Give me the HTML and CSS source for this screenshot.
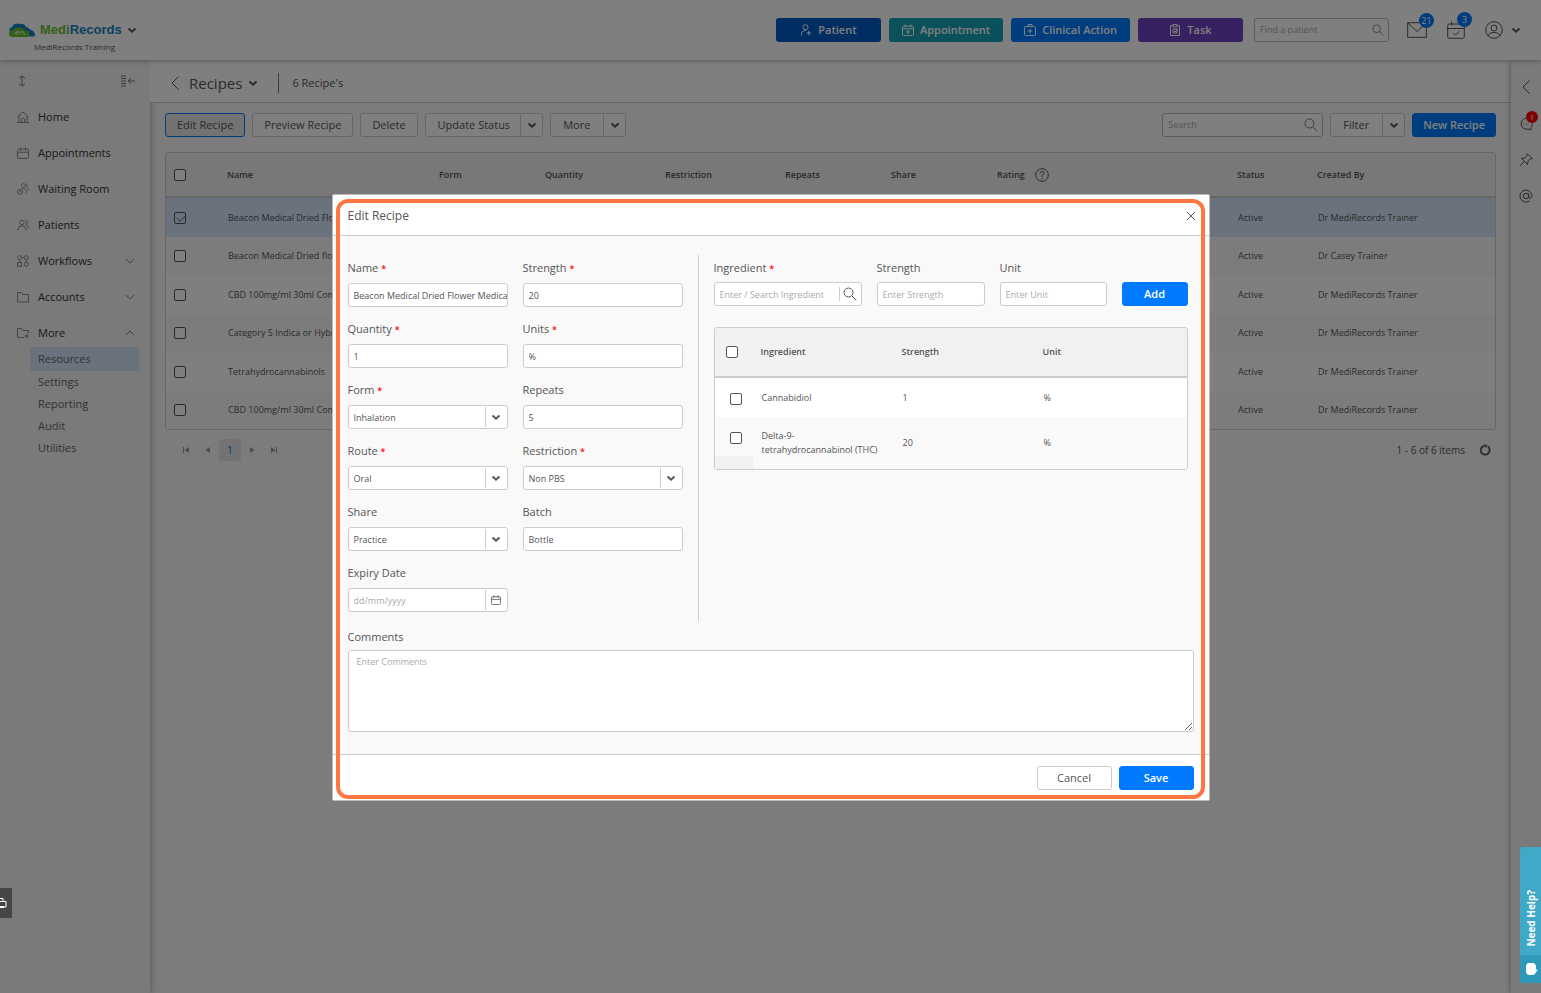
FILE: index.html
```html
<!DOCTYPE html>
<html lang="en">
<head>
    <meta charset="UTF-8">
    <meta name="viewport" content="width=device-width, initial-scale=1.0">
    <title>MediRecords - Recipes</title>
    <link rel="stylesheet" href="styles.css">
</head>
<body>
    <!-- Icon set -->
    <svg class="sprite" aria-hidden="true">
        <symbol id="i-down" viewBox="0 0 10 10"><path d="M1.5 3.5 5 6.8 8.5 3.5" stroke-width="1.9"/></symbol>
        <symbol id="i-thin-down" viewBox="0 0 10 10"><path d="M1 3 5 7 9 3"/></symbol>
        <symbol id="i-thin-up" viewBox="0 0 10 10"><path d="M1 7 5 3 9 7"/></symbol>
        <symbol id="i-back" viewBox="0 0 10 16"><path d="M8.5 1.5 2 8l6.500 6.500"/></symbol>
        <symbol id="i-search" viewBox="0 0 14 14"><circle cx="5.500" cy="5.500" r="4.500"/><path d="m8.800 8.800 4.500 4.500"/></symbol>
        <symbol id="i-close" viewBox="0 0 10 10"><path d="m1 1 8 8M9 1 1 9"/></symbol>
        <symbol id="i-calendar" viewBox="0 0 12 12"><rect x=".5" y="2" width="11" height="9.500" rx="1.500"/><path d="M.5 5.200h11M3.500.5v3M8.500.5v3"/></symbol>
        <symbol id="i-home" viewBox="0 0 12 12"><path d="M.5 6 6 1l5.500 5M2 5v6.500h8V5M4.500 11.500V8q1.500-2 3 0v3.500M0 11.500h12"/></symbol>
        <symbol id="i-person" viewBox="0 0 12 12"><circle cx="5" cy="3.500" r="2.200"/><path d="M1 11.500V10q0-3 4-3.200 4 .2 4 3.200v1.500M8 .8q2.800.4 2.300 2.800Q10 5 8.600 5.400q2.800 1 2.900 4.100"/></symbol>
        <symbol id="i-waiting" viewBox="0 0 14 14"><circle cx="7.500" cy="3" r="2.300"/><circle cx="3.500" cy="10.300" r="3"/><path d="M3.500 8.500v2h1.500M6 6.500q4.500-.4 5 3.500v2M10.500 1q2 .6 1.700 2.500-.2 1.300-1.300 1.600 2.400.8 2.500 3.900"/></symbol>
        <symbol id="i-flow" viewBox="0 0 12 12"><circle cx="2.700" cy="2.700" r="2"/><circle cx="9.300" cy="2.700" r="2"/><circle cx="9.300" cy="9.300" r="2"/><rect x=".7" y="7.500" width="3.800" height="3.800"/><path d="M4.700 2.700h2.600M2.700 4.700v2.800M9.300 4.700v2.600"/></symbol>
        <symbol id="i-folder" viewBox="0 0 12 12"><path d="M.5 11V1.500h4l1 2h6V11z"/></symbol>
        <symbol id="i-folder-plus" viewBox="0 0 12 12"><path d="M7 10.500H.5V1.500h4l1 2h6V6M7.500 9H12M9.800 6.800v4.500"/></symbol>
        <symbol id="i-add-person" viewBox="0 0 12 12"><circle cx="5.500" cy="3.200" r="2.500"/><path d="M1.500 11.500V10q0-3.500 4.500-3.500M8.800 6.700v4.600M6.500 9h4.600"/></symbol>
        <symbol id="i-add-cal" viewBox="0 0 12 12"><rect x=".5" y="2" width="11" height="9.500" rx="1"/><path d="M.5 4.800h11M3.200.5v3M8.800.5v3M6 6v4M4 8h4"/></symbol>
        <symbol id="i-kit" viewBox="0 0 12 12"><rect x=".5" y="2.500" width="11" height="9" rx="1"/><path d="M4 2.500v-2h4v2M6 4.700v4.600M3.700 7h4.600"/></symbol>
        <symbol id="i-clip" viewBox="0 0 12 12"><path d="M4 1.700H1.500v9.800h9V1.700H8M4 .5h4v2.300H4zM4 5h4v4H4zM5 7l1 1 2.500-3"/></symbol>
        <symbol id="i-mail" viewBox="0 0 20 16"><rect x=".7" y=".7" width="18.600" height="14.600"/><path d="m1 1 9 8.500L19 1"/></symbol>
        <symbol id="i-event" viewBox="0 0 18 18"><rect x=".7" y="3" width="16.600" height="14.300" rx="1.500"/><path d="M.7 7.500h16.600M4.500.5v4M13.500.5v4M6.500 12l2 2 4-3.800"/></symbol>
        <symbol id="i-user" viewBox="0 0 18 18"><circle cx="9" cy="9" r="8.300"/><circle cx="9" cy="7" r="3"/><path d="M3.300 14.800q.7-3.300 5.700-3.300t5.700 3.300"/></symbol>
        <symbol id="i-help" viewBox="0 0 14 14"><circle cx="7" cy="7" r="6.300"/><path d="M5 5.500Q5 3.500 7 3.500t2 1.800Q9 6.500 7 7.500V9M7 10v1.200"/></symbol>
        <symbol id="i-updown" viewBox="0 0 10 12"><path d="M5 1v10M2 3.500 5 .8l3 2.700M2 8.500l3 2.700 3-2.700"/></symbol>
        <symbol id="i-collapse" viewBox="0 0 14 12"><path d="M0 1h5M0 3.500h5M0 6h5M0 8.500h5M0 11h5M7 6h7M10 3 7 6l3 3"/></symbol>
        <symbol id="i-chat" viewBox="0 0 14 14"><path d="M12 12.800v-2.500A5.600 5.600 0 1 0 9.500 12zM4.500 7h.8M6.600 7h.8M8.700 7h.8"/></symbol>
        <symbol id="i-pin" viewBox="0 0 14 14"><path d="m8.500.8 4.700 4.700-2 .5L9 8.200l-.5 3.300L2.500 5.500l3.300-.5L8 2.800zM5 8.500.8 13.200"/></symbol>
        <symbol id="i-at" viewBox="0 0 14 14"><circle cx="7" cy="7" r="2.700"/><path d="M9.700 4.300V8q.2 1.700 1.800 1.500 1.500-.5 1.500-2.500a6 6 0 1 0-2.500 5"/></symbol>
        <symbol id="i-refresh" viewBox="0 0 12 12"><path d="M8.800 2.500A4.500 4.500 0 1 1 5 1.800" stroke-width="1.800"/><path d="M5 0 8.500 1.500 6 4z" fill="currentColor" stroke="none"/></symbol>
        <symbol id="i-prev" viewBox="0 0 8 8"><path d="M6 1v6L1.500 4z" fill="currentColor" stroke="none"/></symbol>
        <symbol id="i-next" viewBox="0 0 8 8"><path d="M2 1v6l4.500-3z" fill="currentColor" stroke="none"/></symbol>
        <symbol id="i-first" viewBox="0 0 8 8"><path d="M7 1v6L2.500 4zM1 1h1v6H1z" fill="currentColor" stroke="none"/></symbol>
        <symbol id="i-last" viewBox="0 0 8 8"><path d="M1 1v6l4.500-3zM6 1h1v6H6z" fill="currentColor" stroke="none"/></symbol>
    </svg>

    <header class="topbar">
        <div class="brand">
            <a href="#" class="logo">
                <svg class="cloud" viewBox="0 0 27 15" aria-hidden="true">
                    <path d="M3 10Q-1 6 4 4 6-1 12 1q4-1 6 3 3 0 4 2.500 5 1 5 6.500-3 1-7 0z" fill="#1480c0"/>
                    <path d="M4 14Q0 13 1 9.500 2 7 5 7q2-3 6-2.500 4 0 5.500 3 4-.5 5 2.500.5 3-2 4z" fill="#6abf2f"/>
                    <path d="m6 11 4-3-1 4M12 8v3M14 8l3 4" stroke="#fff" fill="none"/>
                </svg>
                <span class="medi">Medi</span><span class="records">Records</span>
                <svg class="icon chev"><use href="#i-down"/></svg>
            </a>
            <span class="practice">MediRecords Training</span>
        </div>
        <div class="top-actions">
            <button class="btn-top patient"><svg class="icon s12"><use href="#i-add-person"/></svg>Patient</button>
            <button class="btn-top appointment"><svg class="icon s12"><use href="#i-add-cal"/></svg>Appointment</button>
            <button class="btn-top clinical"><svg class="icon s12"><use href="#i-kit"/></svg>Clinical Action</button>
            <button class="btn-top task"><svg class="icon s12"><use href="#i-clip"/></svg>Task</button>
        </div>
        <label class="search find">
            <input type="text" placeholder="Find a patient" aria-label="Find a patient">
            <svg class="icon s12"><use href="#i-search"/></svg>
        </label>
        <div class="top-icons">
            <button class="icon-btn" aria-label="Messages"><svg class="icon mail"><use href="#i-mail"/></svg><span class="badge">21</span></button>
            <button class="icon-btn" aria-label="Tasks"><svg class="icon s18"><use href="#i-event"/></svg><span class="badge">3</span></button>
            <button class="icon-btn account" aria-label="Account"><svg class="icon s18"><use href="#i-user"/></svg><svg class="icon chev"><use href="#i-down"/></svg></button>
        </div>
    </header>

    <div class="layout">
        <nav class="sidebar">
            <div class="side-tools">
                <svg class="icon s12"><use href="#i-updown"/></svg>
                <svg class="icon s14"><use href="#i-collapse"/></svg>
            </div>
            <a href="#" class="side-link"><svg class="icon s12"><use href="#i-home"/></svg>Home</a>
            <a href="#" class="side-link"><svg class="icon s12"><use href="#i-calendar"/></svg>Appointments</a>
            <a href="#" class="side-link"><svg class="icon s12"><use href="#i-waiting"/></svg>Waiting Room</a>
            <a href="#" class="side-link"><svg class="icon s12"><use href="#i-person"/></svg>Patients</a>
            <a href="#" class="side-link"><svg class="icon s12"><use href="#i-flow"/></svg>Workflows<svg class="icon s10 arrow"><use href="#i-thin-down"/></svg></a>
            <a href="#" class="side-link"><svg class="icon s12"><use href="#i-folder"/></svg>Accounts<svg class="icon s10 arrow"><use href="#i-thin-down"/></svg></a>
            <a href="#" class="side-link"><svg class="icon s12"><use href="#i-folder-plus"/></svg>More<svg class="icon s10 arrow"><use href="#i-thin-up"/></svg></a>
            <div class="submenu">
                <a href="#" class="active">Resources</a>
                <a href="#">Settings</a>
                <a href="#">Reporting</a>
                <a href="#">Audit</a>
                <a href="#">Utilities</a>
            </div>
        </nav>

        <main>
            <div class="title-bar">
                <svg class="icon back"><use href="#i-back"/></svg>
                <h1>Recipes</h1>
                <svg class="icon chev"><use href="#i-down"/></svg>
                <span class="count">6 Recipe's</span>
            </div>

            <div class="toolbar">
                <button class="btn selected">Edit Recipe</button>
                <button class="btn">Preview Recipe</button>
                <button class="btn">Delete</button>
                <div class="split"><button>Update Status</button><button class="drop" aria-label="Update Status options"><svg class="icon chev"><use href="#i-down"/></svg></button></div>
                <div class="split"><button class="wide">More</button><button class="drop" aria-label="More options"><svg class="icon chev"><use href="#i-down"/></svg></button></div>
                <label class="search grow">
                    <input type="text" placeholder="Search" aria-label="Search">
                    <svg class="icon s14"><use href="#i-search"/></svg>
                </label>
                <div class="split"><button class="wide">Filter</button><button class="drop" aria-label="Filter options"><svg class="icon chev"><use href="#i-down"/></svg></button></div>
                <button class="btn primary">New Recipe</button>
            </div>

            <div class="grid-box">
                <table class="recipes">
                    <colgroup>
                        <col class="c-check"><col class="c-name"><col class="c-form"><col class="c-qty"><col class="c-qty"><col class="c-form"><col class="c-form"><col class="c-rating"><col class="c-status"><col>
                    </colgroup>
                    <thead>
                        <tr>
                            <th><input type="checkbox" aria-label="Select all recipes"></th>
                            <th>Name</th><th>Form</th><th>Quantity</th><th>Restriction</th><th>Repeats</th><th>Share</th>
                            <th><span class="rating">Rating <svg class="icon s14"><use href="#i-help"/></svg></span></th>
                            <th>Status</th><th>Created By</th>
                        </tr>
                    </thead>
                    <tbody>
                        <tr class="selected"><td><input type="checkbox" checked aria-label="Select recipe"></td><td>Beacon Medical Dried Flower</td><td></td><td></td><td></td><td></td><td></td><td></td><td>Active</td><td>Dr MediRecords Trainer</td></tr>
                        <tr><td><input type="checkbox" aria-label="Select recipe"></td><td>Beacon Medical Dried flower</td><td></td><td></td><td></td><td></td><td></td><td></td><td>Active</td><td>Dr Casey Trainer</td></tr>
                        <tr><td><input type="checkbox" aria-label="Select recipe"></td><td>CBD 100mg/ml 30ml Compound</td><td></td><td></td><td></td><td></td><td></td><td></td><td>Active</td><td>Dr MediRecords Trainer</td></tr>
                        <tr><td><input type="checkbox" aria-label="Select recipe"></td><td>Category 5 Indica or Hybrid</td><td></td><td></td><td></td><td></td><td></td><td></td><td>Active</td><td>Dr MediRecords Trainer</td></tr>
                        <tr><td><input type="checkbox" aria-label="Select recipe"></td><td>Tetrahydrocannabinols</td><td></td><td></td><td></td><td></td><td></td><td></td><td>Active</td><td>Dr MediRecords Trainer</td></tr>
                        <tr><td><input type="checkbox" aria-label="Select recipe"></td><td>CBD 100mg/ml 30ml Compound</td><td></td><td></td><td></td><td></td><td></td><td></td><td>Active</td><td>Dr MediRecords Trainer</td></tr>
                    </tbody>
                </table>
            </div>

            <div class="pager">
                <button aria-label="First page"><svg class="icon s8"><use href="#i-first"/></svg></button>
                <button aria-label="Previous page"><svg class="icon s8"><use href="#i-prev"/></svg></button>
                <button class="current">1</button>
                <button aria-label="Next page"><svg class="icon s8"><use href="#i-next"/></svg></button>
                <button aria-label="Last page"><svg class="icon s8"><use href="#i-last"/></svg></button>
                <span class="total">1 - 6 of 6 items</span>
                <svg class="icon s12"><use href="#i-refresh"/></svg>
            </div>
        </main>

        <aside class="rail">
            <svg class="icon back"><use href="#i-back"/></svg>
            <button class="icon-btn" aria-label="Chat"><svg class="icon s14"><use href="#i-chat"/></svg><span class="badge red">1</span></button>
            <svg class="icon s14"><use href="#i-pin"/></svg>
            <svg class="icon s14"><use href="#i-at"/></svg>
        </aside>
    </div>

    <div class="overlay">
        <div class="modal" role="dialog" aria-labelledby="modalTitle">
            <div class="modal-header">
                <h2 id="modalTitle">Edit Recipe</h2>
                <button class="close" aria-label="Close"><svg class="icon s10"><use href="#i-close"/></svg></button>
            </div>

            <div class="modal-body">
                <div class="columns">
                    <div class="recipe-form">
                        <div class="field"><label for="name">Name <b>*</b></label><input id="name" type="text" value="Beacon Medical Dried Flower Medical"></div>
                        <div class="field"><label for="strength">Strength <b>*</b></label><input id="strength" type="text" value="20"></div>
                        <div class="field"><label for="quantity">Quantity <b>*</b></label><input id="quantity" type="text" value="1"></div>
                        <div class="field"><label for="units">Units <b>*</b></label><input id="units" type="text" value="%"></div>
                        <div class="field"><label for="form">Form <b>*</b></label><div class="combo"><select id="form"><option>Inhalation</option></select><span><svg class="icon chev"><use href="#i-down"/></svg></span></div></div>
                        <div class="field"><label for="repeats">Repeats</label><input id="repeats" type="text" value="5"></div>
                        <div class="field"><label for="route">Route <b>*</b></label><div class="combo"><select id="route"><option>Oral</option></select><span><svg class="icon chev"><use href="#i-down"/></svg></span></div></div>
                        <div class="field"><label for="restriction">Restriction <b>*</b></label><div class="combo"><select id="restriction"><option>Non PBS</option></select><span><svg class="icon chev"><use href="#i-down"/></svg></span></div></div>
                        <div class="field"><label for="share">Share</label><div class="combo"><select id="share"><option>Practice</option></select><span><svg class="icon chev"><use href="#i-down"/></svg></span></div></div>
                        <div class="field"><label for="batch">Batch</label><input id="batch" type="text" value="Bottle"></div>
                        <div class="field"><label for="expiry">Expiry Date</label><div class="combo date"><input id="expiry" type="text" placeholder="dd/mm/yyyy"><span><svg class="icon s10"><use href="#i-calendar"/></svg></span></div></div>
                    </div>

                    <div class="ingredients">
                        <div class="ingredient-form">
                            <div class="field"><label for="ingredient">Ingredient <b>*</b></label><div class="combo lookup"><input id="ingredient" type="text" placeholder="Enter / Search Ingredient"><span><svg class="icon s14"><use href="#i-search"/></svg></span></div></div>
                            <div class="field"><label for="ingStrength">Strength</label><input id="ingStrength" type="text" placeholder="Enter Strength"></div>
                            <div class="field"><label for="ingUnit">Unit</label><input id="ingUnit" type="text" placeholder="Enter Unit"></div>
                            <button class="btn primary">Add</button>
                        </div>
                        <div class="grid-box">
                            <table class="ingredient-table">
                                <colgroup><col class="c-tick"><col class="c-third"><col class="c-third"><col></colgroup>
                                <thead>
                                    <tr><th><input type="checkbox" aria-label="Select all ingredients"></th><th>Ingredient</th><th>Strength</th><th>Unit</th></tr>
                                </thead>
                                <tbody>
                                    <tr><td class="tick"><div><input type="checkbox" aria-label="Select Cannabidiol"></div></td><td>Cannabidiol</td><td>1</td><td>%</td></tr>
                                    <tr><td class="tick"><div><input type="checkbox" aria-label="Select THC"></div></td><td>Delta-9-<br>tetrahydrocannabinol (THC)</td><td>20</td><td>%</td></tr>
                                </tbody>
                            </table>
                        </div>
                    </div>
                </div>

                <div class="field comments">
                    <label for="comments">Comments</label>
                    <textarea id="comments" placeholder="Enter Comments"></textarea>
                </div>
            </div>

            <div class="modal-footer">
                <button class="btn">Cancel</button>
                <button class="btn primary">Save</button>
            </div>
            <div class="highlight"></div>
        </div>
    </div>

    <button class="side-tab" aria-label="Feedback">
        <svg viewBox="0 0 12 14" aria-hidden="true"><path d="M0 2.500h3V5M0 5.500h6V11H0" fill="none" stroke="#fff"/><path d="M0 10h4v2H0z" fill="#fff"/></svg>
    </button>
    <button class="need-help">
        <span>Need Help?</span>
        <svg viewBox="0 0 14 14" aria-hidden="true"><path d="M5 1h3q4 0 4 4v2l2 2-2 .5Q11.500 13 8 13H6q-4 0-4-4V5q0-4 3-4z" fill="#fff"/></svg>
    </button>
</body>
</html>
```

FILE: styles.css
```css
* { box-sizing: border-box; }
body {
    margin: 0;
    min-height: 100vh;
    display: flex;
    flex-direction: column;
    font-family: "Open Sans", "Noto Sans", sans-serif;
    font-size: 11px;
    font-weight: 500;
    line-height: 16px;
    color: #555;
    background-color: #f9f9f9;
}
button, input, select, textarea {
    font: inherit;
    color: inherit;
}
button { cursor: pointer; }
a {
    color: inherit;
    text-decoration: none;
}
h1, h2 { margin: 0; }

/* Icons */
.sprite {
    position: absolute;
    width: 0;
    height: 0;
}
.icon {
    flex: none;
    fill: none;
    stroke: currentColor;
    stroke-width: 1;
}
.s8 { width: 8px; height: 8px; }
.s10, .chev { width: 10px; height: 10px; }
.s12 { width: 12px; height: 12px; }
.s14 { width: 14px; height: 14px; }
.s18 { width: 18px; height: 18px; }
.mail { width: 20px; height: 16px; }
.back { width: 10px; height: 16px; }

/* Top bar */
.topbar {
    position: relative;
    z-index: 2;
    height: 60px;
    display: flex;
    align-items: center;
    padding: 0 20px 0 8px;
    background-color: #fff;
    box-shadow: 0 1px 5px rgba(0, 0, 0, 0.3);
}
.brand {
    display: flex;
    flex-direction: column;
    gap: 1px;
    padding-top: 17px;
}
.logo {
    display: flex;
    align-items: center;
    font-family: "Liberation Sans", Arial, sans-serif;
    font-size: 13px;
    font-weight: bold;
}
.cloud {
    width: 27px;
    height: 15px;
    margin-right: 5px;
}
.medi { color: #6abf2f; }
.records { color: #1480c0; }
.logo .chev { margin-left: 5px; }
.practice {
    padding-left: 26px;
    font-size: 8px;
}
.top-actions {
    display: flex;
    gap: 8px;
    margin-left: auto;
}
.btn-top {
    min-width: 105px;
    height: 24px;
    padding: 0 13px;
    display: flex;
    align-items: center;
    justify-content: center;
    gap: 6px;
    border: none;
    border-radius: 3px;
    font-weight: 600;
    color: #fff;
}
.patient { background-color: #005cc5; }
.appointment { background-color: #17a2b8; }
.clinical { background-color: #007bff; }
.task { background-color: #6f42c1; }
.search {
    display: flex;
    align-items: center;
    height: 24px;
    padding-right: 4px;
    border: 1px solid #bbb;
    border-radius: 3px;
    background-color: #fff;
}
.search .icon { color: #777; }
.search input {
    flex: 1;
    min-width: 0;
    padding: 0 5px;
    border: none;
    outline: none;
    background: none;
    font-size: 9px;
}
::placeholder {
    color: #aaa;
    opacity: 1;
}
.find {
    width: 135px;
    margin-left: 11px;
}
.top-icons {
    display: flex;
    align-items: center;
    gap: 20px;
    margin-left: 18px;
}
.icon-btn {
    position: relative;
    display: flex;
    align-items: center;
    padding: 0;
    border: none;
    background: none;
}
.account { gap: 8px; }
.badge {
    position: absolute;
    top: -9px;
    right: -7px;
    width: 15px;
    height: 15px;
    border-radius: 50%;
    background-color: #007bff;
    color: #fff;
    font-size: 9px;
    line-height: 15px;
    text-align: center;
}
.badge.red {
    top: -6px;
    right: -5px;
    width: 12px;
    height: 12px;
    background-color: #f00;
    font-size: 8px;
    line-height: 12px;
}

/* Sidebar */
.layout {
    flex: 1;
    display: flex;
}
.sidebar {
    width: 150px;
    padding-top: 3px;
    background-color: #f4f4f4;
    box-shadow: 1px 0 6px rgba(0, 0, 0, 0.3);
    color: #333;
}
.side-tools {
    height: 36px;
    display: flex;
    align-items: center;
    justify-content: space-between;
    padding: 0 15px 0 16px;
    color: #777;
}
.side-link {
    height: 36px;
    display: flex;
    align-items: center;
    gap: 9px;
    padding: 0 15px 0 17px;
}
.side-link .icon { color: #888; }
.side-link .arrow { margin-left: auto; }
.submenu {
    display: flex;
    flex-direction: column;
    margin: -4px 11px 0 30px;
}
.submenu a {
    padding-left: 8px;
    line-height: 22px;
    color: #666;
}
.submenu .active {
    background-color: #d5e4fb;
    border-radius: 3px;
    line-height: 24px;
}

/* Recipes list */
main {
    flex: 1;
    min-width: 0;
}
.title-bar {
    height: 43px;
    display: flex;
    align-items: center;
    padding: 4px 20px 0;
    background-color: #fff;
    border-bottom: 1px solid #ccc;
}
.title-bar h1 {
    margin: 0 6px 0 9px;
    font-size: 15px;
    font-weight: 500;
}
.count {
    margin-left: 20px;
    padding-left: 13px;
    border-left: 1px solid #777;
    line-height: 20px;
}
.toolbar {
    display: flex;
    gap: 7px;
    padding: 10px 15px 15px;
}
.btn {
    height: 24px;
    padding: 0 11px;
    border: 1px solid #ccc;
    border-radius: 3px;
    background-color: #fff;
}
.btn.selected {
    border-color: #007bff;
    background-color: #e6e6e6;
}
.btn.primary {
    border-color: #007bff;
    background-color: #007bff;
    color: #fff;
    font-weight: 600;
}
.toolbar .primary { padding: 0 10px; }
.split {
    height: 24px;
    display: flex;
    border: 1px solid #ccc;
    border-radius: 3px;
    background-color: #fff;
}
.split button {
    padding: 0 10px 0 12px;
    border: none;
    background: none;
}
.split .wide { padding-right: 13px; }
.split .drop {
    display: flex;
    align-items: center;
    padding: 0 5px 0 6px;
    border-left: 1px solid #ccc;
}
.grow {
    width: 161px;
    margin-left: auto;
}
.grid-box {
    border: 1px solid #ccc;
    border-radius: 3px;
    overflow: hidden;
}
main .grid-box { margin: 0 15px; }
table {
    width: 100%;
    border-collapse: collapse;
    table-layout: fixed;
    font-size: 9px;
    line-height: 14px;
}
th, td {
    padding: 0;
    text-align: left;
    white-space: nowrap;
}
th {
    background-color: #f1f1f1;
    border-bottom: 2px solid #ccc;
    font-weight: 600;
}
td { background-color: #fff; }
tr:nth-child(even) td { background-color: #f9f9f9; }
.recipes th { height: 44px; }
.recipes td {
    height: 38px;
    padding-left: 1px;
}
.recipes tr:nth-child(odd) td { height: 39px; }
.recipes th:first-child, .recipes td:first-child { padding-left: 8px; }
.recipes .selected td { background-color: #d5e4fb; }
.recipes tr.selected:nth-child(odd) td { height: 40px; }
.c-check { width: 61px; }
.c-name { width: 212px; }
.c-form { width: 106px; }
.c-qty { width: 120px; }
.c-rating { width: 240px; }
.c-status { width: 80px; }
.rating {
    display: flex;
    align-items: center;
    gap: 10px;
}
input[type="checkbox"] {
    appearance: none;
    display: block;
    width: 12px;
    height: 12px;
    margin: 0;
    border: 1px solid #555;
    border-radius: 2px;
    background-color: #fff;
}
input[type="checkbox"]:checked::after {
    content: "";
    display: block;
    width: 7px;
    height: 4px;
    margin: 2px 0 0 2px;
    border-left: 1px solid #777;
    border-bottom: 1px solid #777;
    transform: rotate(-45deg);
}
.selected input[type="checkbox"] { background-color: transparent; }
.pager {
    display: flex;
    align-items: center;
    padding: 9px 20px 0 25px;
}
.pager button {
    width: 22px;
    height: 22px;
    display: flex;
    align-items: center;
    justify-content: center;
    padding: 0;
    border: none;
    background: none;
    color: #999;
}
.pager .current {
    border-radius: 3px;
    background-color: #e6e6e6;
    color: #007bff;
}
.total {
    margin: 0 14px 0 auto;
    font-size: 10px;
}

/* Right rail */
.rail {
    width: 30px;
    display: flex;
    flex-direction: column;
    align-items: center;
    gap: 22px;
    padding-top: 19px;
    background-color: #f4f4f4;
    box-shadow: -1px 0 5px rgba(0, 0, 0, 0.3);
}

/* Edit dialog */
.overlay {
    position: fixed;
    inset: 0;
    z-index: 5;
    display: flex;
    align-items: center;
    justify-content: center;
    padding-top: 2px;
    background-color: rgba(0, 0, 0, 0.5);
}
.modal {
    position: relative;
    width: 878px;
    max-width: 100%;
    border: 1px solid #bbb;
    border-radius: 2px;
    background-color: #fff;
}
.modal-header {
    height: 41px;
    display: flex;
    align-items: center;
    justify-content: space-between;
    padding: 1px 13px 0 15px;
    border-bottom: 1px solid #ccc;
}
.modal-header h2 {
    font-size: 12px;
    font-weight: 500;
}
.close {
    display: flex;
    padding: 0;
    border: none;
    background: none;
}
.modal-body {
    padding: 19px 15px 22px;
    background-color: #f9f9f9;
}
.columns {
    display: flex;
    margin-bottom: 8px;
}
.recipe-form {
    display: grid;
    grid-template-columns: 160px 160px;
    gap: 14px 15px;
    padding: 5px 15px 9px 0;
    border-right: 1px solid #ccc;
}
.field {
    display: flex;
    flex-direction: column;
    gap: 7px;
    min-width: 0;
}
.field b {
    color: #f00;
    font-size: 9px;
    font-weight: 600;
    line-height: 1;
}
.field > input, .combo, .field textarea {
    width: 100%;
    border: 1px solid #ccc;
    border-radius: 3px;
    background-color: #fff;
    font-size: 9px;
}
.field > input {
    height: 24px;
    padding: 1px 0 0 5px;
}
.combo {
    height: 24px;
    display: flex;
    align-items: center;
}
.combo select, .combo input {
    flex: 1;
    min-width: 0;
    height: 22px;
    padding: 1px 0 0 5px;
    border: none;
    background: none;
    appearance: none;
}
.combo span {
    width: 22px;
    height: 20px;
    display: flex;
    align-items: center;
    justify-content: center;
    border-left: 1px solid #ccc;
}
.ingredients {
    flex: 1;
    padding: 5px 6px 0 15px;
}
.ingredient-form {
    display: grid;
    grid-template-columns: 148px 108px 107px 1fr;
    gap: 15px;
    align-items: end;
    margin-bottom: 21px;
}
.ingredient-form .field { gap: 6px; }
.lookup span { height: 14px; }
.ingredient-table th { height: 49px; }
.ingredient-table td { height: 39px; }
.ingredient-table tr:nth-child(2) td { height: 52px; }
.ingredient-table td + td { padding-left: 1px; }
.ingredient-table th:first-child { padding-left: 11px; }
.ingredient-table .tick {
    background-image: linear-gradient(#f1f1f1, #f1f1f1);
    background-position: 0 39px;
    background-repeat: no-repeat;
    background-size: 38px 100%;
    vertical-align: top;
}
.tick div {
    height: 39px;
    display: flex;
    align-items: center;
    padding: 2px 0 0 15px;
}
.c-tick { width: 46px; }
.c-third { width: 141px; }
.comments { gap: 5px; }
.field textarea {
    display: block;
    height: 82px;
    padding: 4px 8px;
    line-height: 13px;
    resize: vertical;
}
.modal-footer {
    display: flex;
    justify-content: flex-end;
    gap: 7px;
    padding: 11px 15px 10px;
    border-top: 1px solid #ccc;
}
.modal-footer .btn { width: 75px; }
.highlight {
    position: absolute;
    inset: 4px 4px 1px 3px;
    border: 4px solid #ff7643;
    border-radius: 12px;
    pointer-events: none;
}

/* Floating tabs */
.side-tab {
    position: fixed;
    left: 0;
    bottom: 75px;
    z-index: 6;
    width: 12px;
    height: 30px;
    padding: 0;
    border: none;
    background-color: #464646;
}
.side-tab svg {
    display: block;
    width: 12px;
    height: 14px;
}
.need-help {
    position: fixed;
    right: 0;
    bottom: 10px;
    z-index: 6;
    width: 21px;
    height: 136px;
    display: flex;
    flex-direction: column;
    align-items: center;
    justify-content: flex-end;
    padding: 0;
    border: none;
    border-radius: 3px 0 0 3px;
    background: linear-gradient(#40a9c8 108px, #2f99b9 108px);
    color: #fff;
    font-size: 10px;
    font-weight: bold;
}
.need-help span {
    writing-mode: vertical-rl;
    transform: rotate(180deg);
}
.need-help svg {
    width: 14px;
    height: 14px;
    margin: 15px 0 7px;
}
```
